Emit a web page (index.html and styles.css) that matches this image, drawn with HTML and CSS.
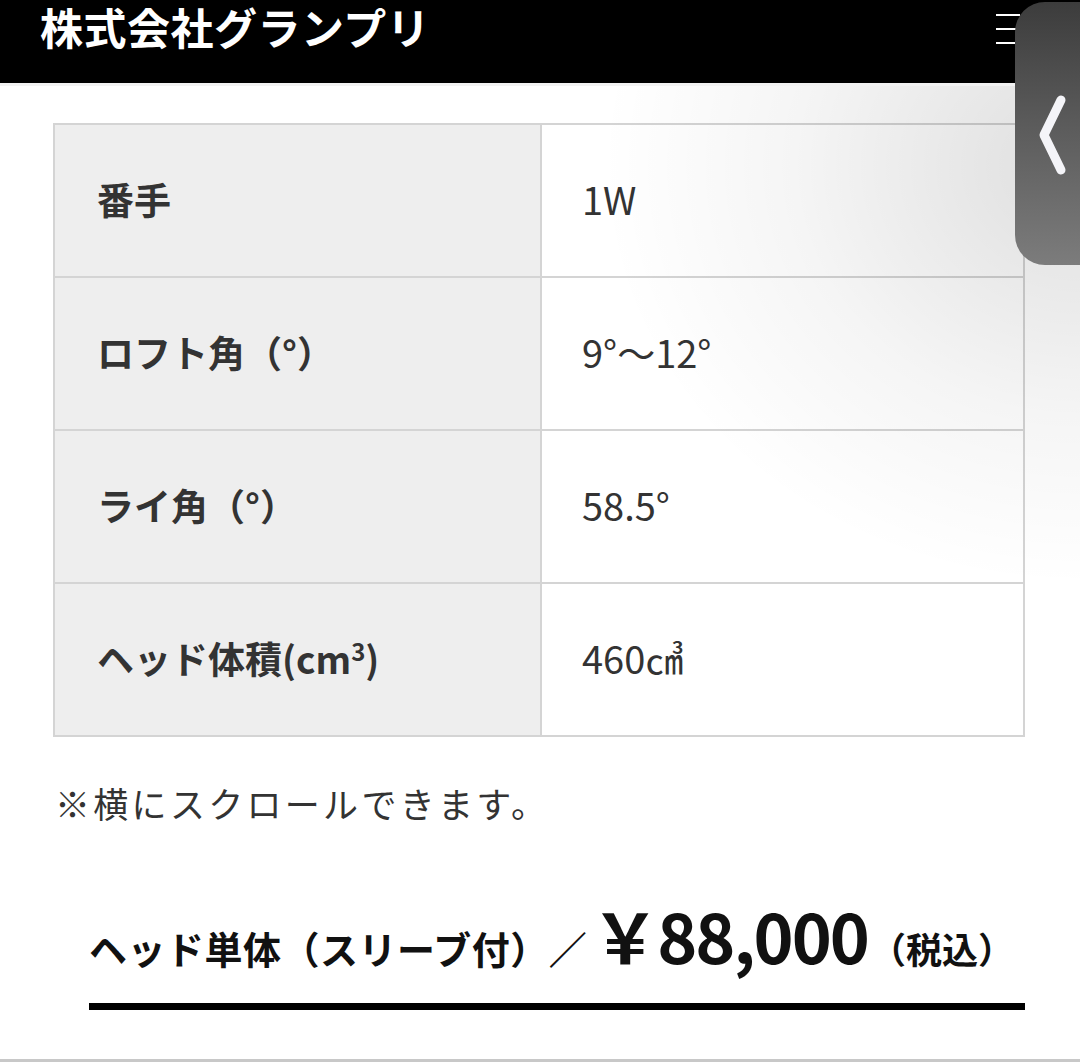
FILE: index.html
```html
<!DOCTYPE html>
<html lang="ja">
<head>
<meta charset="utf-8">
<link rel="stylesheet" href="styles.css">
</head>
<body>
<header class="topbar">
  <h1 class="brand">株式会社グランプリ</h1>
  <div class="menu"><span></span><span></span><span></span></div>
</header>
<main class="content">
  <table class="spec">
    <tr><th>番手</th><td>1W</td></tr>
    <tr><th>ロフト角（°）</th><td>9°〜12°</td></tr>
    <tr><th>ライ角（°）</th><td>58.5°</td></tr>
    <tr><th>ヘッド体積(cm<sup>3</sup>)</th><td>460㎤</td></tr>
  </table>
  <p class="note">※横にスクロールできます。</p>
  <div class="price">
    <span class="price-label">ヘッド単体（スリーブ付）／</span><span class="price-value">￥88,000</span><span class="price-tax">（税込）</span>
  </div>
</main>
<div class="bottom-rule"></div>
<div class="shade"></div>
<div class="side-tab">
  <svg width="40" height="90" viewBox="0 0 40 90"><path d="M28 10 L11 45 L28 80" fill="none" stroke="#f4f4f8" stroke-width="9" stroke-linecap="round" stroke-linejoin="round"/></svg>
</div>
</body>
</html>
```
FILE: styles.css
```css
html, body {
  margin: 0;
  padding: 0;
  background: #fff;
  font-family: "Noto Sans CJK JP", "Noto Sans", sans-serif;
  color: #333;
}
body {
  position: relative;
  width: 1080px;
  height: 1062px;
  overflow: hidden;
}
.topbar {
  height: 83px;
  background: #000;
  display: flex;
  align-items: flex-start;
  justify-content: space-between;
  padding: 0 60px 0 40px;
  border-bottom: 3px solid #f2f2f2;
}
.brand {
  margin: 0;
  color: #fff;
  font-size: 43px;
  font-weight: 700;
  line-height: 52px;
  letter-spacing: 0.5px;
}
.menu {
  display: flex;
  flex-direction: column;
  gap: 12px;
  padding-top: 14px;
}
.menu span {
  display: block;
  width: 24px;
  height: 2px;
  background: #fff;
}
.content {
  padding: 37px 55px 0 53px;
}
.spec {
  width: 972px;
  border-collapse: collapse;
  table-layout: fixed;
  border: 2px solid #d4d4d4;
}
.spec th, .spec td {
  height: 147px;
  border: 2px solid #d4d4d4;
  text-align: left;
  vertical-align: middle;
}
.spec th {
  width: 443px;
  padding: 0 0 4px 42px;
  background: #eeeeee;
  font-size: 37px;
  font-weight: 700;
  color: #333;
}
.spec td {
  padding: 0 0 4px 40px;
  background: #fff;
  font-size: 38px;
  font-weight: 400;
  color: #333;
}
.spec sup {
  font-size: 24px;
  vertical-align: 13px;
  line-height: 0;
}
.note {
  margin: 40px 0 0 2px;
  font-size: 35px;
  letter-spacing: 3.3px;
  color: #333;
}
.price {
  margin: 67px 0 0 36px;
  width: 936px;
  display: flex;
  align-items: baseline;
  line-height: 80px;
  border-bottom: 7px solid #000;
  padding-bottom: 15px;
  color: #111;
  font-weight: 700;
}
.price-label {
  font-size: 38px;
  letter-spacing: 0.5px;
}
.price-value {
  font-size: 68px;
  letter-spacing: -2px;
  margin-left: 4px;
}
.price-tax {
  font-size: 36px;
  margin-left: 2px;
}
.bottom-rule {
  position: absolute;
  left: 0;
  right: 0;
  top: 1059px;
  height: 3px;
  background: #c8c8c8;
}
.shade {
  position: absolute;
  left: 560px;
  top: 86px;
  width: 520px;
  height: 700px;
  background: radial-gradient(ellipse 480px 420px at 520px 80px, rgba(0,0,0,0.13), rgba(0,0,0,0.04) 60%, rgba(0,0,0,0) 100%);
  pointer-events: none;
}
.side-tab {
  position: absolute;
  left: 1015px;
  top: 2px;
  width: 110px;
  height: 263px;
  border-radius: 30px;
  background: linear-gradient(180deg, #3c3c3c 0%, #5a5a5a 45%, #7c7c7c 100%);
  display: flex;
  align-items: flex-start;
  padding: 88px 0 0 18px;
  box-sizing: border-box;
}
```
